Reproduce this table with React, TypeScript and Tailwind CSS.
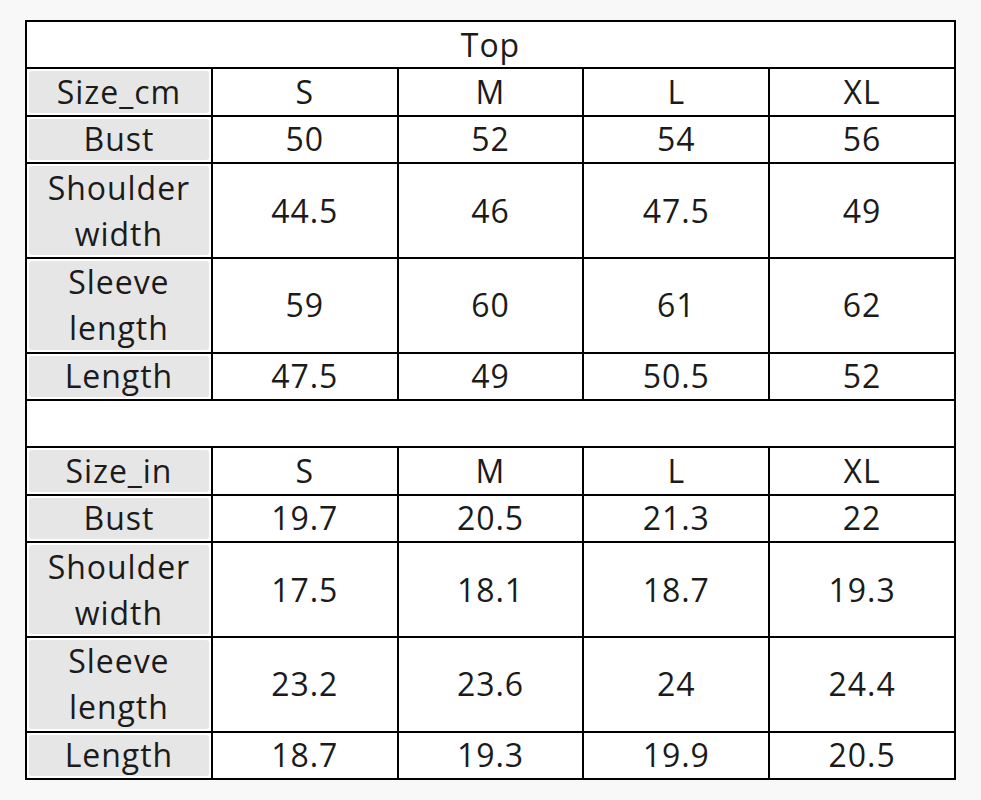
const sizes = ['S', 'M', 'L', 'XL']

type Row = { label: string[]; values: string[] }

const cmRows: Row[] = [
  { label: ['Bust'], values: ['50', '52', '54', '56'] },
  { label: ['Shoulder', 'width'], values: ['44.5', '46', '47.5', '49'] },
  { label: ['Sleeve', 'length'], values: ['59', '60', '61', '62'] },
  { label: ['Length'], values: ['47.5', '49', '50.5', '52'] },
]

const inRows: Row[] = [
  { label: ['Bust'], values: ['19.7', '20.5', '21.3', '22'] },
  { label: ['Shoulder', 'width'], values: ['17.5', '18.1', '18.7', '19.3'] },
  { label: ['Sleeve', 'length'], values: ['23.2', '23.6', '24', '24.4'] },
  { label: ['Length'], values: ['18.7', '19.3', '19.9', '20.5'] },
]

function Label({ lines }: { lines: string[] }) {
  return (
    <div className="bg-white p-[2px] min-h-0">
      <div className="h-full rounded-[3px] bg-[#e7e6e6] flex flex-col items-center justify-center leading-[46px]">
        {lines.map((l) => (
          <span key={l}>{l}</span>
        ))}
      </div>
    </div>
  )
}

function Cell({ children }: { children?: React.ReactNode }) {
  return <div className="bg-white flex items-center justify-center min-h-0">{children}</div>
}

function Section({ unit, rows }: { unit: string; rows: Row[] }) {
  return (
    <>
      <Label lines={[unit]} />
      {sizes.map((s) => (
        <Cell key={unit + s}>{s}</Cell>
      ))}
      {rows.map((r) => (
        <Row key={unit + r.label.join(' ')} row={r} />
      ))}
    </>
  )
}

function Row({ row }: { row: Row }) {
  return (
    <>
      <Label lines={row.label} />
      {row.values.map((v, i) => (
        <Cell key={i}>{v}</Cell>
      ))}
    </>
  )
}

export default function App() {
  return (
    <div className="w-[981px] h-[800px] bg-[#f8f8f8] pt-[20px] pl-[25px]" style={{ fontFamily: '"Open Sans", "Noto Sans", sans-serif' }}>
      <div className="w-[931px] h-[760px] bg-black p-[2px] grid grid-cols-5 gap-[2px] grid-rows-[45.4fr_45.4fr_45.4fr_92.8fr_92.8fr_45.4fr_45.4fr_45.4fr_45.4fr_92.8fr_92.8fr_45.4fr] text-[32px] tracking-[0.03em] text-[#1b1b1b] leading-none">
        <div className="col-span-5 bg-white flex items-center justify-center">Top</div>
        <Section unit="Size_cm" rows={cmRows} />
        <div className="col-span-5 bg-white"></div>
        <Section unit="Size_in" rows={inRows} />
      </div>
    </div>
  )
}
